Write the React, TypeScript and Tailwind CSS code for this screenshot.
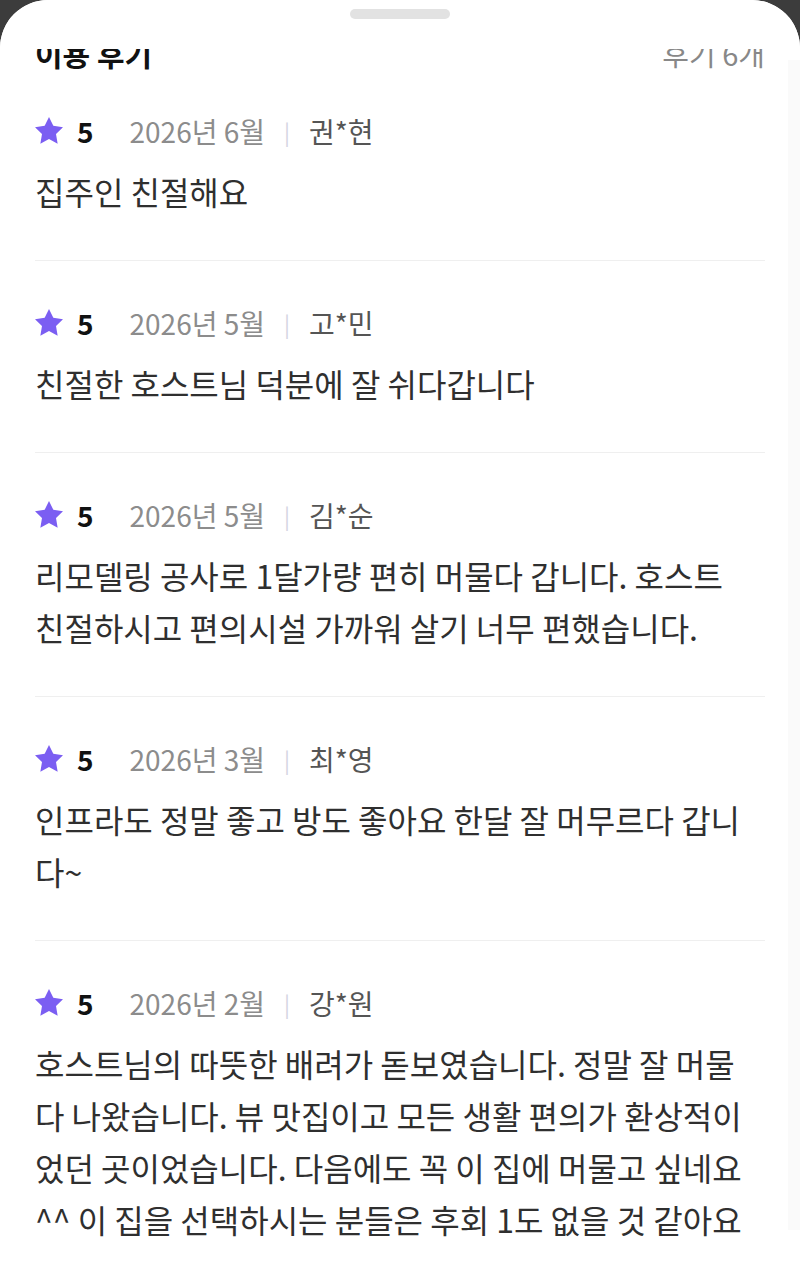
import React from "react"

interface Review {
  month: string
  name: string
  lines: string[]
}

const reviews: Review[] = [
  { month: "2026년 6월", name: "권*현", lines: ["집주인 친절해요"] },
  { month: "2026년 5월", name: "고*민", lines: ["친절한 호스트님 덕분에 잘 쉬다갑니다"] },
  {
    month: "2026년 5월",
    name: "김*순",
    lines: ["리모델링 공사로 1달가량 편히 머물다 갑니다. 호스트", "친절하시고 편의시설 가까워 살기 너무 편했습니다."],
  },
  {
    month: "2026년 3월",
    name: "최*영",
    lines: ["인프라도 정말 좋고 방도 좋아요 한달 잘 머무르다 갑니", "다~"],
  },
  {
    month: "2026년 2월",
    name: "강*원",
    lines: [
      "호스트님의 따뜻한 배려가 돋보였습니다. 정말 잘 머물",
      "다 나왔습니다. 뷰 맛집이고 모든 생활 편의가 환상적이",
      "었던 곳이었습니다. 다음에도 꼭 이 집에 머물고 싶네요",
      "^^ 이 집을 선택하시는 분들은 후회 1도 없을 것 같아요",
    ],
  },
]

function Star() {
  return (
    <svg viewBox="2 2 20 20" className="h-[28px] w-[28px]" fill="#7b5ef2">
      <polygon points="12,2 15.09,8.26 22,9.27 17,14.14 18.18,21.02 12,17.77 5.82,21.02 7,14.14 2,9.27 8.91,8.26" />
    </svg>
  )
}

function ReviewItem({ review }: { review: Review }) {
  return (
    <div className="border-b border-[#efefef] pt-[42px] pb-[43px]">
      {/* Meta row */}
      <div className="flex h-[40px] items-center text-[28px] leading-[40px]">
        <Star />
        <span className="ml-[14px] font-bold text-[#111]">5</span>
        <span className="ml-[36px] text-[#8c8c8c]">{review.month}</span>
        <span className="mx-[19px] text-[22px] text-[#d4d4e2]">|</span>
        <span className="text-[#555]">{review.name}</span>
      </div>
      {/* Body */}
      <div className="mt-[14px] text-[32px] leading-[52px] text-[#2f2f2f]">
        {review.lines.map((l, i) => (
          <div key={i} className="whitespace-nowrap">
            {l}
          </div>
        ))}
      </div>
    </div>
  )
}

export default function App() {
  return (
    <div className="h-[1272px] w-[800px] overflow-hidden bg-[#3c3c3c] font-['Noto_Sans_CJK_KR',sans-serif]">
      <div className="relative flex h-full flex-col overflow-hidden rounded-t-[48px] bg-white">
        {/* Handle */}
        <div className="relative z-10 flex h-[49px] shrink-0 justify-center bg-white pt-[9px]">
          <div className="h-[10px] w-[100px] rounded-full bg-[#e2e2e2]" />
        </div>

        {/* Scrolled content */}
        <div className="flex-1 overflow-hidden">
          <div className="-mt-[40px] px-[35px]">
            <div className="flex h-[60px] items-end justify-between">
              <span className="text-[30px] font-bold leading-[32px] text-[#111]">이용 후기</span>
              <span className="text-[29px] leading-[32px] text-[#888]">후기 6개</span>
            </div>
            {reviews.map((r, i) => (
              <ReviewItem key={i} review={r} />
            ))}
          </div>
        </div>

        {/* Scrollbar track */}
        <div className="pointer-events-none absolute top-[60px] right-0 bottom-[42px] w-[12px] bg-[#fafafa]" />
      </div>
    </div>
  )
}
